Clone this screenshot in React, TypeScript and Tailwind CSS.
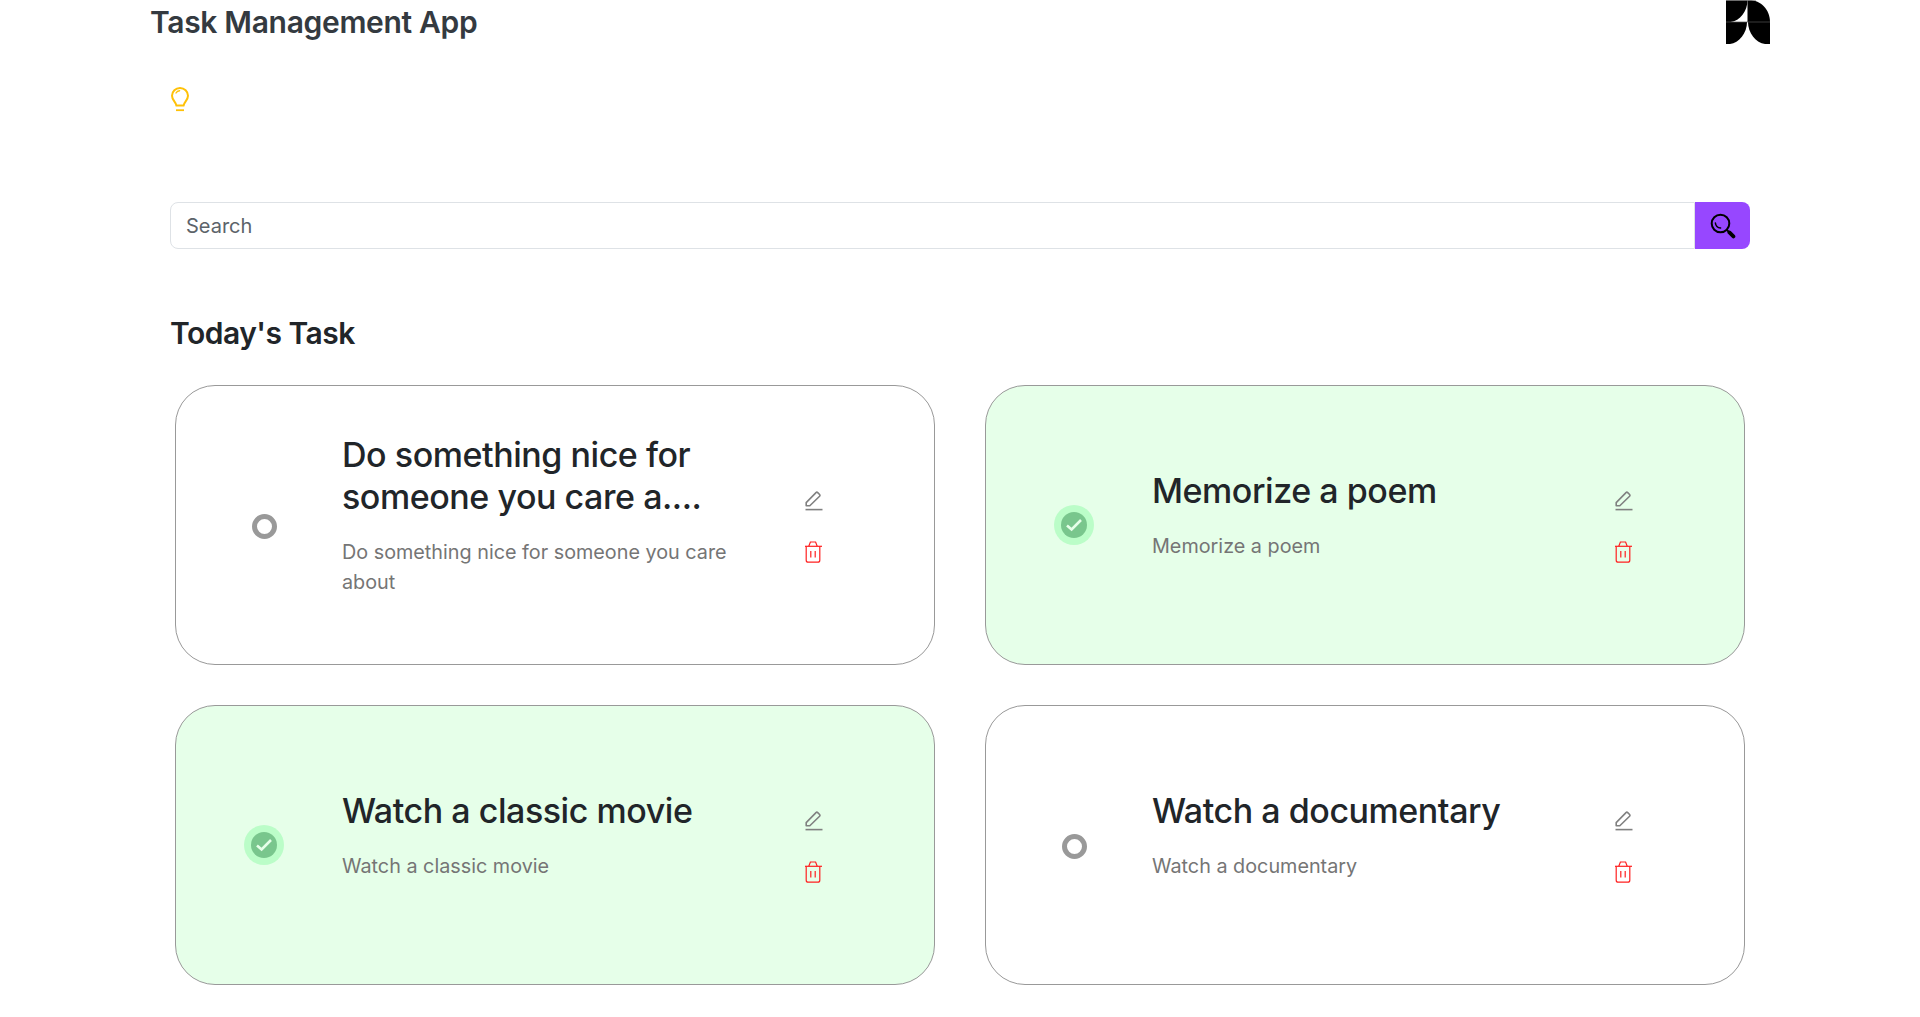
const tasks = [
  {
    title: 'Do something nice for someone you care a....',
    description: 'Do something nice for someone you care about',
    done: false,
  },
  { title: 'Memorize a poem', description: 'Memorize a poem', done: true },
  { title: 'Watch a classic movie', description: 'Watch a classic movie', done: true },
  { title: 'Watch a documentary', description: 'Watch a documentary', done: false },
];

const Logo = () => (
  <svg width="44" height="44" viewBox="0 0 44 44">
    <path d="M0 0H21.5C21.5 11 14 21 4.5 22H0Z" fill="#000" />
    <path d="M21.5 0H23C35 0 44 10 44 22H21.5Z" fill="#000" />
    <path d="M0 22H21C21 33 13 43 4 44H0Z" fill="#000" />
    <path d="M22 22H44V44H39C30 43 22 33 22 22Z" fill="#000" />
    <path d="M0 22H44" stroke="#555" strokeWidth="0.7" />
    <path d="M0 0.4H30" stroke="#999" strokeWidth="0.8" />
  </svg>
);

const Bulb = () => (
  <svg width="18" height="25" viewBox="0 0 18 25" fill="none" stroke="#ffc107">
    <path
      d="M5.4 18.6C5.2 15.4 1 13.4 1 8.8C1 4.4 4.6 1 9 1C13.4 1 17 4.4 17 8.8C17 13.4 12.8 15.4 12.6 18.6Z"
      strokeWidth="2"
      strokeLinejoin="round"
    />
    <path d="M5 6C5.8 4.6 7 3.9 8.6 3.7" strokeWidth="1.4" strokeLinecap="round" />
    <path d="M5 23.2H13" strokeWidth="1.8" />
  </svg>
);

const SearchIcon = () => (
  <svg width="26" height="26" viewBox="0 0 26 26" fill="none" stroke="#000">
    <circle cx="10.5" cy="10.5" r="8.8" strokeWidth="2" />
    <path d="M5.4 10C5.7 12.8 7.8 14.8 10.6 15" strokeWidth="1.5" strokeLinecap="round" />
    <path d="M16.8 16.8L19 19" strokeWidth="1.8" />
    <path d="M19.4 19.4L23.4 23.4" strokeWidth="3.8" strokeLinecap="round" />
  </svg>
);

const Pencil = () => (
  <svg width="18" height="20" viewBox="0 0 18 20" fill="none" stroke="#808080">
    <path
      d="M1.2 14.8L1.2 11.6L11 1.6C11.5 1.1 12.2 1.1 12.7 1.6L14.6 3.5C15.1 4 15.1 4.7 14.6 5.2L4.8 14.8Z"
      strokeWidth="1.6"
      strokeLinejoin="round"
    />
    <path d="M0.5 18.6H17.5" strokeWidth="1.6" />
  </svg>
);

const Trash = () => (
  <svg width="18" height="22" viewBox="1 0 18 22" fill="none" stroke="#ff2020" strokeWidth="1.2">
    <path d="M0 5.3H18" />
    <path d="M2.2 5.3V19.2C2.2 20.4 3 21.2 4.2 21.2H13.8C15 21.2 15.8 20.4 15.8 19.2V5.3" />
    <path d="M4.8 5.2L6.4 1H11.6L13.2 5.2" />
    <path d="M6.8 10V16.4M11.2 10V16.4" />
  </svg>
);

const Check = () => (
  <div className="flex size-10 items-center justify-center rounded-full bg-[#bbfdc8]">
    <div className="flex size-[26px] items-center justify-center rounded-full bg-[#79c68d]">
      <svg width="18" height="14" viewBox="0 0 18 14" fill="none" stroke="#e6ffe9" strokeWidth="2.6">
        <path d="M2 7.5L6.6 11.5L16 2" />
      </svg>
    </div>
  </div>
);

const TaskCard = ({ title, description, done }: (typeof tasks)[number]) => (
  <div
    className={`mx-[5px] flex h-[280px] items-center rounded-[40px] border border-[#999] ${
      done ? 'bg-[#e6ffe9]' : 'bg-white'
    }`}
  >
    <div className="flex w-[166px] justify-center pl-[10px]">
      {done ? <Check /> : <div className="mt-[2px] size-[25px] rounded-full border-[5px] border-[#999]" />}
    </div>
    <div className="w-[400px] pb-[19px]">
      <h3 className="text-[34px] leading-[42px] font-[450] tracking-[-0.45px] text-[#212529]">{title}</h3>
      <p className="mt-[19px] text-[19.8px] leading-[30px] text-[#757575]">{description}</p>
    </div>
    <div className="ml-[63px] flex flex-col items-center gap-[30px] pt-[3px]">
      <Pencil />
      <Trash />
    </div>
  </div>
);

export default function App() {
  return (
    <div className="min-h-[1017px] bg-white font-['Inter',sans-serif]">
      <header className="flex h-[44px] items-center justify-between px-[150px]">
        <h1 className="text-[30px] leading-[44px] font-semibold tracking-[-0.32px] text-[#343a40]">
          Task Management App
        </h1>
        <Logo />
      </header>

      <main className="px-[170px]">
        <div className="pt-[43px] pl-[1px]">
          <Bulb />
        </div>

        <div className="mt-[90px] flex h-[47px]">
          <input
            placeholder="Search"
            className="min-w-0 flex-1 rounded-l-[8px] border border-[#dee2e6] px-[15px] text-[20px] text-[#5c636a] outline-none placeholder:text-[#5c636a]"
          />
          <button className="flex w-[55px] items-center justify-center rounded-r-[8px] bg-[#9747ff]">
            <SearchIcon />
          </button>
        </div>

        <h2 className="mt-[66px] text-[30px] leading-[36px] font-semibold tracking-[-0.5px] text-[#212529]">
          Today's Task
        </h2>

        <div className="mt-[34px] grid grid-cols-2 gap-x-[40px] gap-y-[40px]">
          {tasks.map((t) => (
            <TaskCard key={t.title} {...t} />
          ))}
        </div>
      </main>
    </div>
  );
}
